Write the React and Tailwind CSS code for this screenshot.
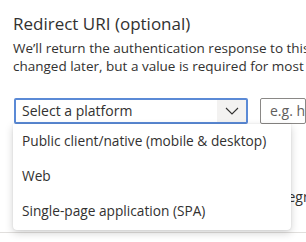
import React from 'react';

const options = ['Public client/native (mobile & desktop)', 'Web', 'Single-page application (SPA)'];

const App = () => {
  return (
    <div className="relative w-[306px] h-[242px] overflow-hidden bg-white text-[#323130] font-['Open_Sans',sans-serif]">
      <div className="pl-[13px] pt-[12px]">
        <h2 className="text-[17px] leading-[24px]">Redirect URI (optional)</h2>
        <p className="mt-[3px] text-[13.5px] leading-[18px] whitespace-nowrap">
          We’ll return the authentication response to this URI after successfully
          <br />
          changed later, but a value is required for most authentication scenarios.
        </p>

        <div className="mt-[23px] flex gap-[12px] pl-px">
          <div className="flex w-[234px] h-[26px] border-2 border-[#5b8ad6] rounded-[2px]">
            <div className="flex-1 pl-[6px] text-[14px] leading-[22px]">Select a platform</div>
            <div className="w-[29px] bg-[#f3f2f1] flex items-center justify-center">
              <svg width="14" height="8" viewBox="0 0 14 8" fill="none">
                <path d="M1 1l6 6 6-6" stroke="#323130" strokeWidth="1.1" />
              </svg>
            </div>
          </div>
          <div className="flex-1 h-[26px] border border-[#8a8886] rounded-[2px] pl-[9px] text-[14px] leading-[24px] whitespace-nowrap overflow-hidden text-[#605e5c]">
            e.g. https://example.com/auth
          </div>
        </div>

        <div className="mt-[64px] pl-[257px] text-[14px] leading-[18px] whitespace-nowrap">Integrate</div>
      </div>

      <div className="absolute left-0 right-0 top-[232px] h-px bg-[#e1dfdd]" />

      <div className="absolute left-[13px] top-[124px] w-[278px] h-[106px] bg-white rounded-b-[4px] shadow-[0_3px_8px_rgba(0,0,0,0.18),0_0_2px_rgba(0,0,0,0.1)]">
        {options.map((opt) => (
          <div key={opt} className="h-[35px] pl-[9px] flex items-center text-[13.7px] whitespace-nowrap">
            {opt}
          </div>
        ))}
      </div>
    </div>
  );
};

export default App;
